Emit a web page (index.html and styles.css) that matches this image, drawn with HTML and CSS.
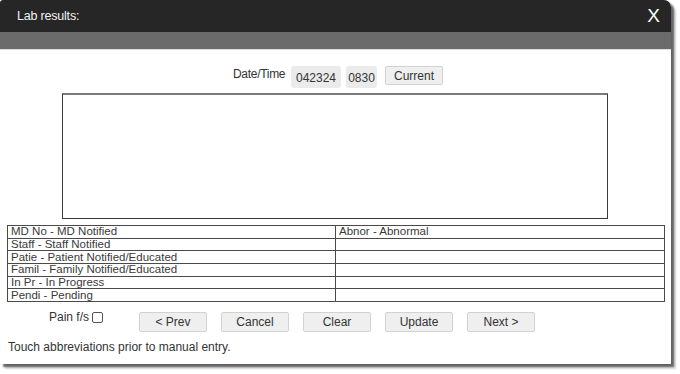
FILE: index.html
```html
<!DOCTYPE html>
<html>
<head>
<meta charset="utf-8">
<link rel="stylesheet" href="styles.css">
</head>
<body>
<div class="dialog">
  <div class="header">
    <span class="title">Lab results:</span>
    <span class="close">X</span>
  </div>
  <div class="subbar"></div>
  <div class="content">
    <div class="datetime">
      <span class="dt-label">Date/Time</span>
      <span class="field f-date">042324</span>
      <span class="field f-time">0830</span>
      <button class="btn btn-current">Current</button>
    </div>
    <div class="notes"></div>
    <table class="abbr">
      <tr><td class="c1">MD No - MD Notified</td><td>Abnor - Abnormal</td></tr>
      <tr><td class="c1">Staff - Staff Notified</td><td></td></tr>
      <tr><td class="c1">Patie - Patient Notified/Educated</td><td></td></tr>
      <tr><td class="c1">Famil - Family Notified/Educated</td><td></td></tr>
      <tr><td class="c1">In Pr - In Progress</td><td></td></tr>
      <tr><td class="c1">Pendi - Pending</td><td></td></tr>
    </table>
    <div class="actions">
      <label class="pain">Pain f/s <span class="check"></span></label>
      <div class="buttons">
        <button class="btn btn-act">&lt; Prev</button>
        <button class="btn btn-act">Cancel</button>
        <button class="btn btn-act">Clear</button>
        <button class="btn btn-act">Update</button>
        <button class="btn btn-act">Next &gt;</button>
      </div>
    </div>
    <div class="hint">Touch abbreviations prior to manual entry.</div>
  </div>
</div>
</body>
</html>
```
FILE: styles.css
```css
html, body {
  margin: 0;
  padding: 0;
  background: #ffffff;
}
body {
  font-family: "Liberation Sans", Arial, sans-serif;
  color: #333;
  width: 680px;
  height: 374px;
  overflow: hidden;
}
.dialog {
  width: 671px;
  height: 364px;
  background: #fff;
  border-radius: 3px 7px 0 0;
  box-shadow: 3px 3px 2px rgba(0, 0, 0, 0.55), 5px 5px 2px rgba(0, 0, 0, 0.15);
  overflow: hidden;
  display: flex;
  flex-direction: column;
}
.header {
  height: 32px;
  background: #262626;
  display: flex;
  align-items: center;
  justify-content: space-between;
  padding: 0 11px 0 17px;
  flex-shrink: 0;
}
.title {
  color: #f2f2f2;
  font-size: 12.5px;
  letter-spacing: -0.2px;
}
.close {
  color: #fff;
  font-size: 19px;
  line-height: 19px;
  margin-top: -1px;
}
.subbar {
  height: 17px;
  background: #6b6b6b;
  border-bottom: 1px solid #dcdcdc;
  flex-shrink: 0;
}
.content {
  display: flex;
  flex-direction: column;
}
.datetime {
  display: flex;
  align-items: flex-start;
  padding-left: 233px;
  margin-top: 16px;
  height: 22px;
}
.dt-label {
  font-size: 12px;
  line-height: 14px;
  margin-top: 1px;
  width: 58px;
  letter-spacing: -0.3px;
  color: #333;
}
.field {
  display: block;
  height: 22px;
  box-sizing: border-box;
  background: #ebebeb;
  border-radius: 3px;
  font-size: 12px;
  line-height: 14px;
  padding-top: 5px;
  text-align: center;
  color: #333;
}
.f-date {
  width: 50px;
  margin-right: 5px;
}
.f-time {
  width: 31px;
  margin-right: 8px;
}
.btn {
  font-family: "Liberation Sans", Arial, sans-serif;
  font-size: 12px;
  color: #333;
  background: #efefef;
  border: 1px solid #d2d2d2;
  border-radius: 2px;
  padding: 0;
  box-sizing: border-box;
  height: 19px;
  line-height: 16px;
}
.btn-current {
  width: 58px;
}
.notes {
  margin: 5px 0 0 62px;
  width: 546px;
  height: 126px;
  box-sizing: border-box;
  border: 1px solid #3a3a3a;
  border-top: 2px solid #7a7a7a;
}
.abbr {
  margin: 6px 0 0 7px;
  width: 658px;
  border-collapse: collapse;
  font-size: 11.5px;
  color: #3a3a3a;
}
.abbr td {
  border: 1px solid #4a4a4a;
  padding: 0 0 0 3px;
  height: 11.7px;
  line-height: 11px;
  white-space: nowrap;
}
.abbr .c1 {
  width: 324px;
}
.actions {
  display: flex;
  align-items: flex-start;
  margin-top: 8px;
  height: 21px;
}
.pain {
  display: flex;
  align-items: flex-start;
  margin-left: 49px;
  font-size: 12px;
  line-height: 14px;
  color: #333;
}
.check {
  display: inline-block;
  width: 9px;
  height: 9px;
  border: 1px solid #555;
  border-radius: 2px;
  margin: 2px 0 0 3px;
  background: #fff;
}
.buttons {
  display: flex;
  gap: 14px;
  margin-left: 36px;
  margin-top: 2px;
}
.btn-act {
  width: 68px;
  height: 20px;
}
.hint {
  margin: 9px 0 0 8px;
  font-size: 12px;
  line-height: 14px;
  color: #333;
}
```
